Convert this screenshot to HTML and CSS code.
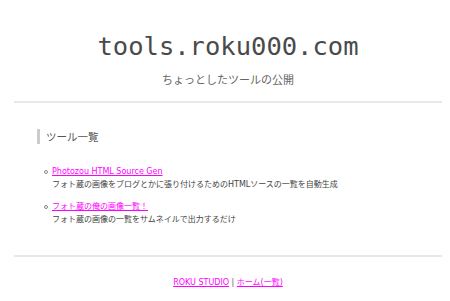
FILE: index.html
```html
<!DOCTYPE html>
<html lang="ja">
<head>
    <meta charset="UTF-8">
    <meta name="viewport" content="width=device-width, initial-scale=1.0">
    <title>tools.roku000.com</title>
    <link rel="stylesheet" href="styles.css">
</head>
<body>

    <!-- Header -->
    <div class="header">
        <h1 class="site-title">tools.roku000.com</h1>
        <p class="site-sub">ちょっとしたツールの公開</p>
    </div>

    <!-- Tool list -->
    <div class="main">
        <h2 class="section-title">ツール一覧</h2>
        <ul class="tools">
            <li class="tool">
                <span class="dot"></span>
                <div>
                    <a href="#">Photozou HTML Source Gen</a>
                    <div class="desc">フォト蔵の画像をブログとかに張り付けるためのHTMLソースの一覧を自動生成</div>
                </div>
            </li>
            <li class="tool">
                <span class="dot"></span>
                <div>
                    <a href="#">フォト蔵の俺の画像一覧！</a>
                    <div class="desc">フォト蔵の画像の一覧をサムネイルで出力するだけ</div>
                </div>
            </li>
        </ul>
    </div>

    <!-- Footer -->
    <div class="footer">
        <a href="#">ROKU STUDIO</a> | <a href="#">ホーム(一覧)</a>
    </div>

</body>
</html>
```

FILE: styles.css
```css
body {
    margin: 0 8px 0 14px;
    padding: 0;
    font-family: "DejaVu Sans", "Noto Sans CJK JP", sans-serif;
    color: #555;
    background: #fff;
}
a {
    color: #ff00ff;
}
.header {
    padding-top: 31px;
    padding-bottom: 14px;
    border-bottom: 2px solid #e8e8e8;
    text-align: center;
}
.site-title {
    margin: 0;
    font-family: "DejaVu Sans Mono", monospace;
    font-size: 25.5px;
    line-height: 30px;
    font-weight: normal;
    color: #4a4a4a;
}
.site-sub {
    margin: 10px 0 0;
    font-family: "Noto Sans CJK JP", sans-serif;
    font-size: 11px;
    line-height: 16px;
    color: #666;
}
.main {
    padding: 26px 0 29px;
    border-bottom: 2px solid #e8e8e8;
}
.section-title {
    margin: 0 0 0 23px;
    padding-left: 6px;
    border-left: 3px solid #ccc;
    font-family: "Noto Sans CJK JP", sans-serif;
    font-size: 10.5px;
    line-height: 15px;
    font-weight: normal;
    color: #555;
}
.tools {
    list-style: none;
    margin: 21px 0 0;
    padding-left: 30px;
}
.tool {
    display: flex;
    gap: 4px;
    font-size: 8px;
    line-height: 13px;
    margin-bottom: 9px;
}
.tool:last-child {
    margin-bottom: 0;
}
.dot {
    flex: none;
    width: 2px;
    height: 2px;
    margin-top: 4.5px;
    border: 1px solid #888;
    border-radius: 50%;
}
.desc {
    color: #444;
}
.footer {
    padding-top: 19px;
    text-align: center;
    font-size: 8px;
    line-height: 13px;
    color: #555;
}
```
